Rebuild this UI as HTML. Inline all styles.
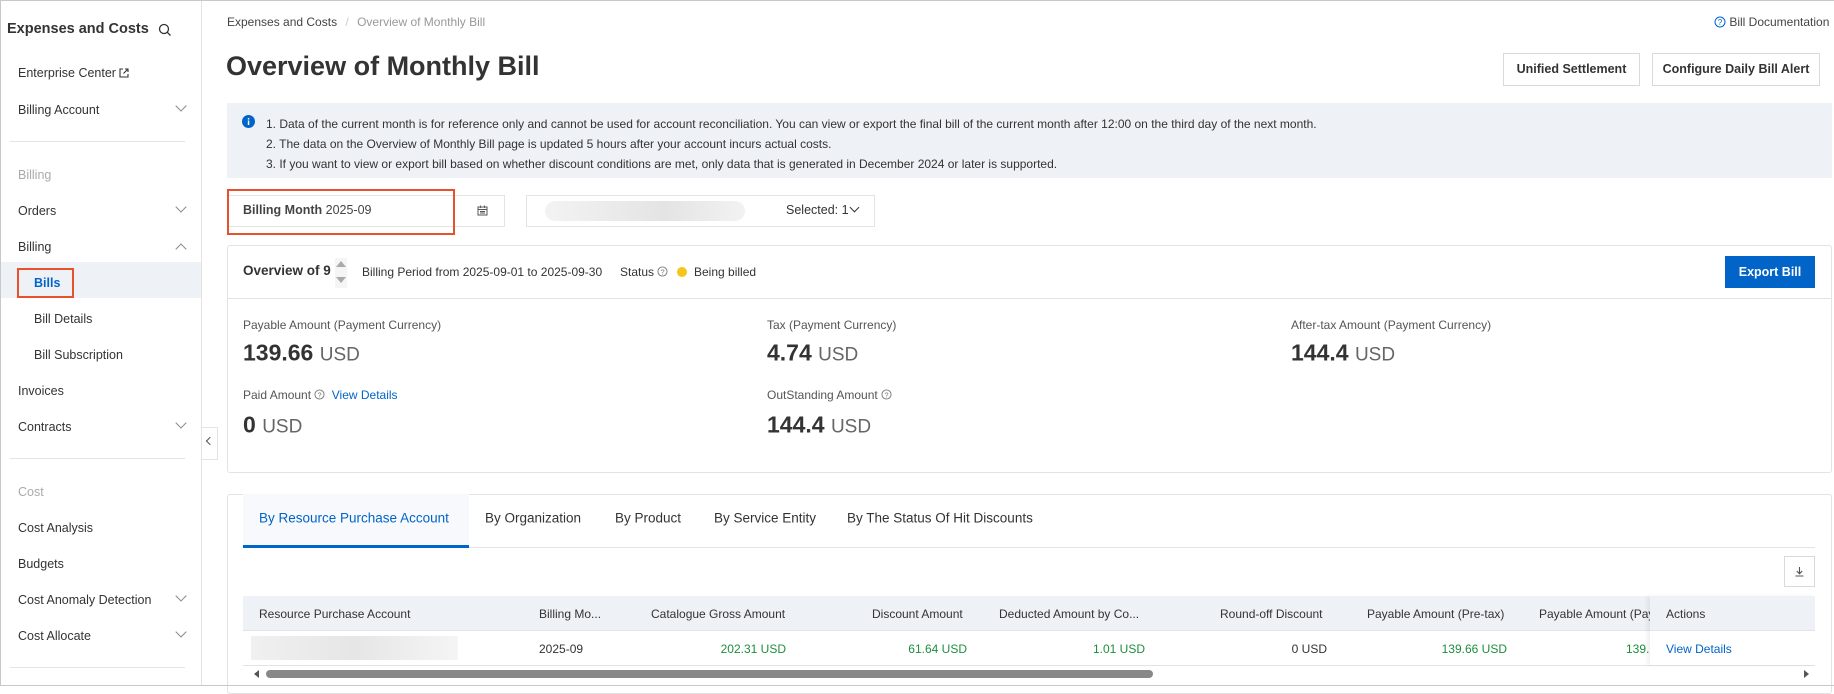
<!DOCTYPE html>
<html><head><meta charset="utf-8"><style>
*{box-sizing:border-box;margin:0;padding:0}
body{width:1834px;height:686px;overflow:hidden;background:#fff;font-family:"Liberation Sans",sans-serif;color:#333;position:relative;font-size:13px}
.a{position:absolute;white-space:nowrap}
.frame{position:absolute;left:0;top:0;width:1834px;height:686px;border:1px solid #c8c8c8;border-right:none;pointer-events:none}
.sb{position:absolute;left:0;top:0;width:202px;height:686px;border-right:1px solid #e3e3e3}
.si{position:absolute;left:18px;font-size:12.5px;color:#333;transform:translateY(-50%);white-space:nowrap}
.chev{position:absolute;left:177px;width:8px;height:8px;border-right:1.2px solid #888;border-bottom:1.2px solid #888;transform:rotate(45deg)}
.chevu{transform:rotate(-135deg)}
.div{position:absolute;left:10px;width:175px;height:1px;background:#e3e3e3}
.btn{position:absolute;border:1px solid #d9d9d9;background:#fff;font-size:12.5px;font-weight:bold;text-align:center;line-height:31px;color:#333}
.lbl{position:absolute;font-size:12px;color:#555;transform:translateY(-50%);white-space:nowrap}
.num{position:absolute;font-size:23px;font-weight:bold;color:#333;transform:translateY(-50%);white-space:nowrap}
.num span{font-weight:normal;color:#666;font-size:19px}
.th{position:absolute;top:614px;transform:translateY(-50%);font-size:12px;color:#333;white-space:nowrap}
.td{position:absolute;top:649px;transform:translateY(-50%);font-size:12px;color:#333;white-space:nowrap}
.g{color:#1e8e3e}
.tab{position:absolute;top:518px;transform:translateY(-50%);font-size:13.5px;color:#333;white-space:nowrap}
</style></head><body>
<div class="sb">
<div class="a" style="left:7px;top:21px;font-size:14.5px;font-weight:bold;color:#333">Expenses and Costs</div>
<svg class="a" style="left:158px;top:23px" width="14" height="14" viewBox="0 0 14 14"><circle cx="6" cy="6" r="4.5" fill="none" stroke="#333" stroke-width="1.3"/><path d="M9.3 9.3L12.5 12.5" stroke="#333" stroke-width="1.3"/></svg>
<div class="si" style="top:73px">Enterprise Center <svg width="10" height="10" viewBox="0 0 10 10" style="vertical-align:-1px"><path d="M4 1H1V9H9V6M6 1H9V4M9 1L4.5 5.5" fill="none" stroke="#333" stroke-width="1.1"/></svg></div>
<div class="si" style="top:110px">Billing Account</div><div class="chev" style="top:102px"></div>
<div class="div" style="top:141px"></div>
<div class="si" style="top:175px;color:#aaa">Billing</div>
<div class="si" style="top:211px">Orders</div><div class="chev" style="top:203px"></div>
<div class="si" style="top:247px">Billing</div><div class="chev chevu" style="top:245px"></div>
<div class="a" style="left:0;top:262px;width:201px;height:36px;background:#eef1f6"></div>
<div class="a" style="left:17px;top:268px;width:57px;height:30px;border:2px solid #e8512d"></div>
<div class="si" style="left:34px;top:283px;color:#0064c8;font-weight:bold">Bills</div>
<div class="si" style="left:34px;top:319px">Bill Details</div>
<div class="si" style="left:34px;top:355px">Bill Subscription</div>
<div class="si" style="top:391px">Invoices</div>
<div class="si" style="top:427px">Contracts</div><div class="chev" style="top:419px"></div>
<div class="div" style="top:458px"></div>
<div class="si" style="top:492px;color:#aaa">Cost</div>
<div class="si" style="top:528px">Cost Analysis</div>
<div class="si" style="top:564px">Budgets</div>
<div class="si" style="top:600px">Cost Anomaly Detection</div><div class="chev" style="top:592px"></div>
<div class="si" style="top:636px">Cost Allocate</div><div class="chev" style="top:628px"></div>
<div class="div" style="top:667px"></div>
</div>
<div class="a" style="left:202px;top:427px;width:16px;height:33px;border:1px solid #e3e3e3;border-left:none;background:#fff"></div>
<div class="a" style="left:207px;top:438px;width:6px;height:6px;border-left:1.2px solid #555;border-bottom:1.2px solid #555;transform:rotate(45deg)"></div>

<div class="a" style="left:227px;top:15px;font-size:12px;color:#444">Expenses and Costs <span style="color:#ccc;margin:0 5px">/</span> <span style="color:#999">Overview of Monthly Bill</span></div>
<div class="a" style="left:1714px;top:15px;font-size:12px;color:#444"><svg width="12" height="12" viewBox="0 0 12 12" style="vertical-align:-2px"><circle cx="6" cy="6" r="5" fill="none" stroke="#0064c8"/><text x="6" y="9" font-size="8" text-anchor="middle" fill="#0064c8" font-family="Liberation Sans">?</text></svg> Bill Documentation</div>
<div class="a" style="left:226px;top:51px;font-size:27px;font-weight:bold;color:#333">Overview of Monthly Bill</div>
<div class="btn" style="left:1503px;top:53px;width:137px;height:33px">Unified Settlement</div>
<div class="btn" style="left:1652px;top:53px;width:168px;height:33px">Configure Daily Bill Alert</div>

<div class="a" style="left:227px;top:103px;width:1605px;height:75px;background:#eef1f6"></div>
<svg class="a" style="left:242px;top:115px" width="13" height="13" viewBox="0 0 13 13"><circle cx="6.5" cy="6.5" r="6.5" fill="#0064c8"/><rect x="5.8" y="5.5" width="1.5" height="4.5" fill="#fff"/><rect x="5.8" y="3" width="1.5" height="1.5" fill="#fff"/></svg>
<div class="a" style="left:266px;top:114px;font-size:12px;line-height:20px;color:#333">1. Data of the current month is for reference only and cannot be used for account reconciliation. You can view or export the final bill of the current month after 12:00 on the third day of the next month.<br>2. The data on the Overview of Monthly Bill page is updated 5 hours after your account incurs actual costs.<br>3. If you want to view or export bill based on whether discount conditions are met, only data that is generated in December 2024 or later is supported.</div>

<div class="a" style="left:227px;top:195px;width:278px;height:32px;border:1px solid #e3e3e3"></div>
<div class="a" style="left:227px;top:189px;width:228px;height:46px;border:2.5px solid #e8512d"></div>
<div class="a" style="left:243px;top:203px;font-size:12.5px;font-weight:bold;color:#444">Billing Month <span style="font-weight:normal">2025-09</span></div>
<svg class="a" style="left:477px;top:205px" width="11" height="11" viewBox="0 0 11 11"><rect x="1" y="2" width="9" height="8" fill="none" stroke="#555"/><path d="M1 4.5H10M3.5 0.5V3M7.5 0.5V3M3 6.5H8M3 8H8" stroke="#555" stroke-width="0.9"/></svg>
<div class="a" style="left:526px;top:195px;width:349px;height:32px;border:1px solid #e3e3e3"></div>
<div class="a" style="left:545px;top:201px;width:200px;height:20px;border-radius:10px;background:linear-gradient(90deg,#f3f3f3,#e4e4e4 60%,#f2f2f2)"></div>
<div class="a" style="left:786px;top:203px;font-size:12.5px;color:#333">Selected: 1</div>
<div class="a" style="left:851px;top:204px;width:7px;height:7px;border-right:1.3px solid #333;border-bottom:1.3px solid #333;transform:rotate(45deg)"></div>

<div class="a" style="left:227px;top:245px;width:1605px;height:228px;border:1px solid #e3e3e3;border-radius:3px"></div>
<div class="a" style="left:228px;top:298px;width:1603px;height:1px;background:#e3e3e3"></div>
<div class="a" style="left:243px;top:263px;font-size:13.5px;font-weight:bold">Overview of 9</div>
<div class="a" style="left:335px;top:258px;width:12px;height:30px;background:#f5f5f5"></div>
<div class="a" style="left:336px;top:261px;border:5px solid transparent;border-bottom:6px solid #aaa;border-top:none"></div>
<div class="a" style="left:336px;top:277px;border:5px solid transparent;border-top:6px solid #aaa;border-bottom:none"></div>
<div class="a" style="left:362px;top:265px;font-size:12px">Billing Period from 2025-09-01 to 2025-09-30</div>
<div class="a" style="left:620px;top:265px;font-size:12px">Status <svg width="11" height="11" viewBox="0 0 12 12" style="vertical-align:-1px"><circle cx="6" cy="6" r="5" fill="none" stroke="#777"/><text x="6" y="9" font-size="8" text-anchor="middle" fill="#777" font-family="Liberation Sans">?</text></svg></div>
<div class="a" style="left:677px;top:267px;width:10px;height:10px;border-radius:50%;background:#f5c518"></div>
<div class="a" style="left:694px;top:265px;font-size:12px">Being billed</div>
<div class="a" style="left:1725px;top:256px;width:90px;height:32px;background:#0064c8;color:#fff;font-weight:bold;font-size:12.5px;text-align:center;line-height:32px">Export Bill</div>

<div class="lbl" style="left:243px;top:325px">Payable Amount (Payment Currency)</div>
<div class="lbl" style="left:767px;top:325px">Tax (Payment Currency)</div>
<div class="lbl" style="left:1291px;top:325px">After-tax Amount (Payment Currency)</div>
<div class="num" style="left:243px;top:353px">139.66 <span>USD</span></div>
<div class="num" style="left:767px;top:353px">4.74 <span>USD</span></div>
<div class="num" style="left:1291px;top:353px">144.4 <span>USD</span></div>
<div class="lbl" style="left:243px;top:395px">Paid Amount <svg width="11" height="11" viewBox="0 0 12 12" style="vertical-align:-1px"><circle cx="6" cy="6" r="5" fill="none" stroke="#777"/><text x="6" y="9" font-size="8" text-anchor="middle" fill="#777" font-family="Liberation Sans">?</text></svg> <span style="color:#0064c8;margin-left:3px">View Details</span></div>
<div class="lbl" style="left:767px;top:395px">OutStanding Amount <svg width="11" height="11" viewBox="0 0 12 12" style="vertical-align:-1px"><circle cx="6" cy="6" r="5" fill="none" stroke="#777"/><text x="6" y="9" font-size="8" text-anchor="middle" fill="#777" font-family="Liberation Sans">?</text></svg></div>
<div class="num" style="left:243px;top:425px">0 <span>USD</span></div>
<div class="num" style="left:767px;top:425px">144.4 <span>USD</span></div>

<div class="a" style="left:227px;top:494px;width:1605px;height:200px;border:1px solid #e3e3e3;border-radius:3px"></div>
<div class="a" style="left:243px;top:547px;width:1572px;height:1px;background:#e3e3e3"></div>
<div class="a" style="left:243px;top:494px;width:226px;height:54px;background:#f7f9fc"></div>
<div class="a" style="left:243px;top:545px;width:226px;height:3px;background:#0064c8"></div>
<div class="tab" style="left:259px;color:#0064c8">By Resource Purchase Account</div>
<div class="tab" style="left:485px">By Organization</div>
<div class="tab" style="left:615px">By Product</div>
<div class="tab" style="left:714px">By Service Entity</div>
<div class="tab" style="left:847px">By The Status Of Hit Discounts</div>
<div class="a" style="left:1784px;top:556px;width:31px;height:31px;border:1px solid #d9d9d9"></div>
<svg class="a" style="left:1794px;top:566px" width="11" height="11" viewBox="0 0 11 11"><path d="M5.5 1V7.5M2.8 5L5.5 7.8L8.2 5M1.5 10H9.5" fill="none" stroke="#555" stroke-width="1.1"/></svg>

<div class="a" style="left:243px;top:596px;width:1572px;height:34px;background:#eef1f6"></div>
<div class="a" style="left:243px;top:630px;width:1572px;height:1px;background:#e3e3e3"></div>
<div class="a" style="left:243px;top:665px;width:1572px;height:1px;background:#e3e3e3"></div>
<div class="th" style="left:259px">Resource Purchase Account</div>
<div class="th" style="left:539px">Billing Mo...</div>
<div class="th" style="left:651px">Catalogue Gross Amount</div>
<div class="th" style="left:872px">Discount Amount</div>
<div class="th" style="left:999px">Deducted Amount by Co...</div>
<div class="th" style="left:1220px">Round-off Discount</div>
<div class="th" style="left:1367px">Payable Amount (Pre-tax)</div>
<div class="th" style="left:1539px;width:111px;overflow:hidden">Payable Amount (Payable)</div>
<div class="a" style="left:1650px;top:596px;width:165px;height:69px;box-shadow:-3px 0 4px rgba(0,0,0,0.06)"></div>
<div class="a" style="left:1650px;top:596px;width:165px;height:34px;background:#eef1f6"></div>
<div class="th" style="left:1666px">Actions</div>
<div class="a" style="left:251px;top:636px;width:207px;height:24px;background:linear-gradient(90deg,#f0f0f0,#e6e6e6 50%,#f5f5f5)"></div>
<div class="td" style="left:539px">2025-09</div>
<div class="td g" style="right:1048px">202.31 USD</div>
<div class="td g" style="right:867px">61.64 USD</div>
<div class="td g" style="right:689px">1.01 USD</div>
<div class="td" style="right:507px">0 USD</div>
<div class="td g" style="right:327px">139.66 USD</div>
<div class="td g" style="left:1626px;width:24px;overflow:hidden">139.66</div>
<div class="td" style="left:1666px;color:#0064c8">View Details</div>
<div class="a" style="left:254px;top:670px;border:4px solid transparent;border-right:5px solid #555;border-left:none"></div>
<div class="a" style="left:266px;top:670px;width:887px;height:8px;border-radius:4px;background:#888"></div>
<div class="a" style="left:1804px;top:670px;border:4px solid transparent;border-left:5px solid #555;border-right:none"></div>
<div class="frame"></div>
</body></html>
